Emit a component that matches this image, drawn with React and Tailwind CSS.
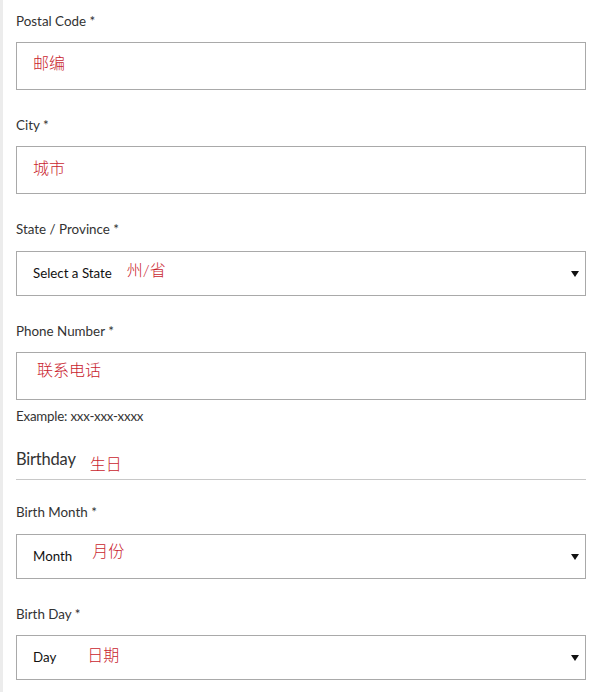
import React from "react";

const font = { fontFamily: "Lato, 'Noto Sans CJK SC', sans-serif" };
const red = "text-[#c91d2e] text-[16px] leading-none font-light";

function Label({ children, className = "" }) {
  return (
    <div className={`h-5 leading-5 text-[13.4px] text-[#333] ${className}`}>{children}</div>
  );
}

function Arrow() {
  return (
    <svg width="8" height="6" viewBox="0 0 8 6" className="absolute right-[6px] top-1/2 -translate-y-1/2">
      <path d="M0 0 L8 0 L4 6 Z" fill="#111" />
    </svg>
  );
}

function TextBox({ children, className = "" }) {
  return (
    <div className={`h-[48px] border border-[#a9a9a9] bg-white flex items-center pl-4 ${className}`}>
      {children}
    </div>
  );
}

function SelectBox({ text, note, noteClass }) {
  return (
    <div className="relative h-[45px] border border-[#a9a9a9] bg-white flex items-center pl-4">
      <span className="text-[13.3px] text-[#111]">{text}</span>
      <span className={`${red} ${noteClass}`}>{note}</span>
      <Arrow />
    </div>
  );
}

export default function App() {
  return (
    <div style={font} className="w-[600px] h-[692px] bg-white border-l-[3px] border-[#ececec] overflow-hidden">
      <div className="pl-[13px] w-[583px] pt-[11px]">
        <Label>Postal Code *</Label>
        <TextBox className="mt-[11px]">
          <span className={`${red} -translate-y-[3px]`}>邮编</span>
        </TextBox>

        <Label className="mt-[25px]">City *</Label>
        <TextBox className="mt-[11px]">
          <span className={`${red} -translate-y-[2px]`}>城市</span>
        </TextBox>

        <Label className="mt-[25px]">State / Province *</Label>
        <div className="mt-[12px]">
          <SelectBox text="Select a State" note="州/省" noteClass="ml-[15px] -translate-y-[4px]" />
        </div>

        <Label className="mt-[25px]">Phone Number *</Label>
        <TextBox className="mt-[11px]">
          <span className={`${red} ml-[4px] -translate-y-[6px]`}>联系电话</span>
        </TextBox>
        <div className="mt-[6px] h-5 leading-5 text-[13.3px] text-[#333] tracking-[-0.2px]">Example: xxx-xxx-xxxx</div>

        <div className="mt-[21px] h-[24px] flex items-center">
          <span className="text-[16.5px] text-[#333] tracking-[-0.2px]">Birthday</span>
          <span className={`${red} ml-[14px] translate-y-[5px]`}>生日</span>
        </div>
        <div className="mt-[8px] border-t border-[#c8c8c8]" />

        <Label className="mt-[22px]">Birth Month *</Label>
        <div className="mt-[12px]">
          <SelectBox text="Month" note="月份" noteClass="ml-[20px] -translate-y-[6px]" />
        </div>

        <Label className="mt-[25px]">Birth Day *</Label>
        <div className="mt-[11px]">
          <SelectBox text="Day" note="日期" noteClass="ml-[31px] -translate-y-[3px]" />
        </div>
      </div>
    </div>
  );
}
